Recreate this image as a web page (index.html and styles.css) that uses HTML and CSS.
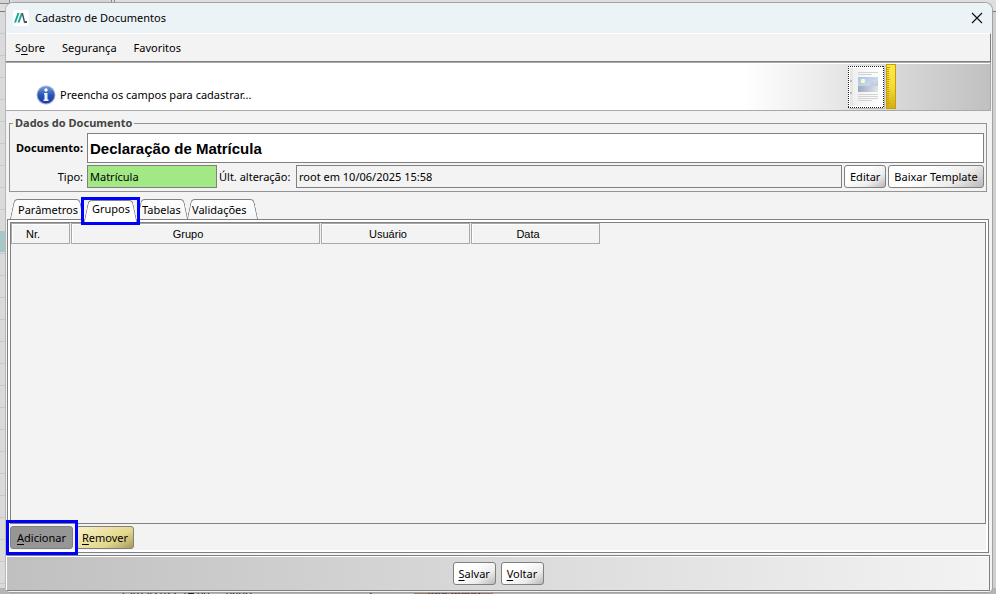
FILE: index.html
```
<!DOCTYPE html>
<html lang="pt-BR">
<head>
<meta charset="utf-8">
<title>Cadastro de Documentos</title>
<link rel="stylesheet" href="styles.css">
</head>
<body>
<div class="behind behind-top" aria-hidden="true"><span></span><span></span><span></span></div>
<div class="behind behind-side" aria-hidden="true"></div>
<div class="behind behind-bottom" aria-hidden="true"><span>13/05/2022 14:00</span><span>tiago</span><span>2</span><span class="behind-tag">Indefinido</span></div>
<main class="window">
  <header class="titlebar">
    <svg class="app-logo" width="16" height="16" viewBox="0 0 16 16" aria-hidden="true">
      <rect width="16" height="16" rx="2" fill="#fff"/>
      <path d="M1 12.500 4.500 3H6.500L3 12.500zM4.500 12.500 8 3H10L6.500 12.500z" fill="#17a58e"/>
      <path d="M8.500 3H10L12 11H14V13H11z" fill="#4a5560"/>
    </svg>
    <h1>Cadastro de Documentos</h1>
    <button class="close" type="button" aria-label="Fechar">
      <svg width="12" height="12" viewBox="0 0 12 12"><path d="M1 1 11 11M11 1 1 11" stroke="#111" stroke-width="1.200" fill="none"/></svg>
    </button>
  </header>
  <nav class="menubar">
    <button type="button">S<u>o</u>bre</button>
    <button type="button">Segurança</button>
    <button type="button">Favoritos</button>
  </nav>
  <section class="banner">
    <svg class="info" width="20" height="20" viewBox="0 0 20 20" aria-hidden="true">
      <defs><linearGradient id="blue" x1="0" y1="0" x2="0" y2="1"><stop offset="0" stop-color="#7698dc"/><stop offset=".5" stop-color="#2856b8"/><stop offset="1" stop-color="#1b3aa5"/></linearGradient></defs>
      <circle cx="10" cy="10" r="9.500" fill="#a9b5cc"/>
      <circle cx="10" cy="10" r="8.500" fill="url(#blue)"/>
      <circle cx="10" cy="5" r="1.700" fill="#fff"/>
      <path d="M8 8H11.500V14.500H12.500V16H7.500V14.500H8.500V9.500H8z" fill="#f1f3fa"/>
    </svg>
    <p>Preencha os campos para cadastrar...</p>
    <svg class="doc-art" width="50" height="46" viewBox="0 0 50 46" aria-hidden="true">
      <defs>
        <linearGradient id="sky" x1="0" y1="0" x2="1" y2="1"><stop offset="0" stop-color="#a9c4e5"/><stop offset="1" stop-color="#e4e9f0"/></linearGradient>
        <linearGradient id="sea" x1="0" y1="0" x2="1" y2="0"><stop offset="0" stop-color="#9aa9c0"/><stop offset="1" stop-color="#e0e4ea"/></linearGradient>
        <linearGradient id="page" x1="0" y1="0" x2="1" y2="0"><stop offset="0" stop-color="#eee"/><stop offset="1" stop-color="#fff"/></linearGradient>
        <linearGradient id="gold" x1="0" y1="0" x2="0" y2="1"><stop offset="0" stop-color="#ffe94a"/><stop offset=".5" stop-color="#f3dc3a"/><stop offset="1" stop-color="#d2ad12"/></linearGradient>
      </defs>
      <rect x="2" y="3" width="36" height="42" rx="1" fill="#bbb"/>
      <rect x="1" y="2" width="36" height="42" fill="#fff"/>
      <path d="M1 2.500H37M1 43.500H37M1.500 2V44M36.500 2V44" stroke="#222" stroke-dasharray="1 1"/>
      <rect x="3" y="4" width="32" height="38" fill="url(#page)"/>
      <path d="M3 4H6V42H3z" fill="#e6e6e6"/>
      <path d="M3 17H5M3 29H5" stroke="#aaa" stroke-width="1.500"/>
      <path d="M11 8.500H31M11 10.500H25M11 30.500H31M11 32.500H31M11 34.500H31M11 36.500H25" stroke="#d4d4d4"/>
      <rect x="11" y="13" width="20" height="15" fill="url(#sky)"/>
      <path d="M22 22 26 17 28 20 31 16V24H22z" fill="#c3ccd8"/>
      <path d="M11 22H31V28H11z" fill="url(#sea)"/>
      <rect x="14" y="15" width="4" height="4" rx="1" fill="#fbfbd0"/>
      <rect x="39.500" y=".500" width="9" height="44" fill="url(#gold)" stroke="#c9a003"/>
      <path d="M40 3.500H43M40 5.500H42M40 7.500H42M40 9.500H42M40 11.500H42M40 13.500H42M40 15.500H43M40 17.500H42M40 19.500H42M40 21.500H42M40 23.500H42M40 25.500H42M40 27.500H43M40 29.500H42M40 31.500H42M40 33.500H42M40 35.500H42M40 37.500H42M40 39.500H43M40 41.500H42" stroke="#c9a003"/>
    </svg>
  </section>
  <form class="content">
    <fieldset class="data">
      <legend>Dados do Documento</legend>
      <div class="fields">
        <label class="strong" for="documento">Documento:</label>
        <input class="name" id="documento" value="Declaração de Matrícula">
        <label for="tipo">Tipo:</label>
        <div class="line">
          <input class="type" id="tipo" value="Matrícula">
          <label class="changed-label" for="alteracao">Últ. alteração:</label>
          <input class="changed" id="alteracao" value="root em 10/06/2025 15:58" readonly>
          <button class="btn edit" type="button">Editar</button>
          <button class="btn template" type="button">Baixar Template</button>
        </div>
      </div>
    </fieldset>
    <div class="tabs" role="tablist">
      <button class="tab tab-wide" type="button" role="tab">Parâmetros</button>
      <button class="tab selected" type="button" role="tab" aria-selected="true">Grupos</button>
      <button class="tab tab-small" type="button" role="tab">Tabelas</button>
      <button class="tab tab-medium" type="button" role="tab">Validações</button>
    </div>
    <section class="pane">
      <div class="list">
        <table>
          <thead><tr><th class="col-nr">Nr.</th><th class="col-group">Grupo</th><th class="col-user">Usuário</th><th class="col-date">Data</th></tr></thead>
        </table>
      </div>
      <div class="actions">
        <button class="btn add" type="button"><u>A</u>dicionar</button>
        <button class="btn remove" type="button"><u>R</u>emover</button>
      </div>
    </section>
  </form>
  <footer class="footer">
    <button class="btn" type="button"><u>S</u>alvar</button>
    <button class="btn" type="button"><u>V</u>oltar</button>
  </footer>
</main>
</body>
</html>
```
FILE: styles.css
```
* { box-sizing: border-box; }
body {
  margin: 0;
  height: 100vh;
  padding: 2px 3px 1px 5px;
  display: flex;
  position: relative;
  overflow: hidden;
  background: #d0d0d0;
  color: #000;
  font: 11px/16px "Noto Sans", "Open Sans", sans-serif;
}
button, input { font: inherit; color: inherit; margin: 0; }
button { white-space: nowrap; }
u { text-underline-offset: 2px; }

.behind { position: absolute; overflow: hidden; }
.behind-top {
  top: 0; left: 0; right: 0;
  height: 12px;
  display: flex;
  gap: 2px;
  background: #dedede;
  border-bottom: 1px solid #777;
}
.behind-top span { height: 4px; border: solid #888; border-width: 0 1px 1px 0; background: #d4d4d4; }
.behind-top span:nth-child(1) { width: 10px; }
.behind-top span:nth-child(2) { width: 100px; }
.behind-side {
  top: 12px; left: 0; bottom: 0;
  width: 5px;
  background: linear-gradient(#a8c8c8, #a8c8c8) 0 219px / 5px 21px no-repeat, repeating-linear-gradient(#dadada 0 21px, #c8c8c8 21px 22px);
}
.behind-bottom {
  left: 0; right: 0; bottom: 0;
  height: 6px;
  padding-left: 120px;
  display: flex;
  align-items: flex-end;
  gap: 16px;
  background: #b4b4b4;
  color: #222;
}
.behind-bottom span { line-height: 8px; height: 6px; }
.behind-bottom span:nth-child(3) { margin-left: 100px; }
.behind-bottom .behind-tag { width: 79px; margin-left: 24px; text-align: center; background: #937a70; }

.window {
  flex: 1;
  min-width: 0;
  position: relative;
  display: flex;
  flex-direction: column;
  overflow: hidden;
  background: #f3f3f3;
  border: 1px solid #a2a2a2;
  border-left-color: #b8b8b8;
  border-radius: 8px 8px 5px 5px;
}
.titlebar {
  height: 30px;
  display: flex;
  align-items: center;
  padding: 0 9px 0 7px;
  gap: 6px;
  background: #ebf3f7;
}
.titlebar h1 { flex: 1; margin: 0; font-size: 11px; font-weight: 400; }
.close { display: flex; padding: 0; border: 0; background: none; }
.menubar {
  height: 29px;
  display: flex;
  align-items: center;
  gap: 17px;
  margin-right: 1px;
  padding: 0 9px;
  border-top: 1px solid #fff;
  border-right: 1px solid #808080;
  border-bottom: 1px solid #808080;
}
.menubar button { padding: 0; border: 0; background: none; }
.banner {
  height: 49px;
  display: flex;
  align-items: flex-end;
  gap: 4px;
  margin-right: 1px;
  padding: 0 93px 0 30px;
  border: 1px solid #a8a8a8;
  border-left: 0;
  background: linear-gradient(90deg, #fff 75%, #c0c0c0);
  box-shadow: inset 0 1px #fff;
}
.banner p { flex: 1; margin: 0 0 7px; }
.info { margin-bottom: 5px; }

.content {
  flex: 1;
  min-height: 0;
  display: flex;
  flex-direction: column;
  padding: 5px 3px 2px 1px;
}
.data {
  min-width: 0;
  margin: 0 2px;
  padding: 3px 2px;
  border: 1px solid #949494;
}
.data legend { margin-left: 1px; padding: 0 2px; line-height: 14px; font-weight: 700; color: #444; }
.fields {
  display: grid;
  grid-template-columns: 71px 1fr;
  gap: 2px 4px;
  align-items: center;
}
.fields > label { text-align: right; white-space: nowrap; }
.fields .strong { font-weight: 700; }
.fields input {
  min-width: 0;
  height: 23px;
  padding: 0 2px;
  border: 1px solid #808080;
  border-radius: 0;
  background: #f3f3f3;
}
.fields .name {
  height: 30px;
  background: #fff;
  font: 700 15px "Liberation Sans", sans-serif;
}
.line { display: flex; align-items: center; gap: 2px; }
.fields .type { width: 130px; background: #a2e884; }
.changed-label { width: 75px; white-space: nowrap; }
.fields .changed { flex: 1; }
.btn {
  height: 23px;
  padding: 0 5px;
  border: 1px solid #808080;
  border-radius: 3px;
  background: linear-gradient(145deg, #fff 35%, #ededed 70%, #b8b8b8);
}
.edit { width: 42px; }
.template { width: 96px; }

.tabs {
  position: relative;
  z-index: 2;
  height: 27px;
  display: flex;
  align-items: flex-end;
  padding: 0 3px;
}
.tab {
  position: relative;
  z-index: 1;
  height: 20px;
  padding: 1px 0 0 5px;
  border: 0;
  background: none;
  text-align: left;
}
.tab::before, .tab::after {
  content: "";
  position: absolute;
  z-index: -1;
  top: 0;
  bottom: 0;
  width: 55%;
  border-top: 1px solid #808080;
  background: linear-gradient(#fff, #f5f5f5);
}
.tab::before { left: 2px; border-left: 1px solid #808080; border-top-left-radius: 4px; transform: skewX(-12deg); }
.tab::after { right: 2px; border-right: 1px solid #808080; border-top-right-radius: 4px; transform: skewX(12deg); }
.tab-wide { width: 74px; padding-left: 8px; }
.tab-small { width: 50px; }
.tab-medium { width: 70px; }
.tab.selected {
  z-index: 2;
  width: 53px;
  height: 22px;
  margin-bottom: -3px;
  padding: 0 0 4px 8px;
  outline: 3px solid #00f;
}
.tab.selected::before, .tab.selected::after { background: #fff; }

.pane {
  flex: 1;
  display: flex;
  flex-direction: column;
  border: 1px solid #808080;
  padding: 2px;
  background: #f3f3f3;
  box-shadow: inset 0 0 0 2px #fff;
}
.list { flex: 1; border: 1px solid #808080; background: #f3f3f3; }
.list table { border-collapse: separate; border-spacing: 1px 0; table-layout: fixed; width: 591px; margin-left: -1px; }
.list th {
  height: 21px;
  padding: 0 15px 0 0;
  border: 1px solid #a8a8a8;
  box-shadow: inset 1px 1px #fff;
  font: 400 11px/14px "Liberation Sans", sans-serif;
  text-align: center;
}
.col-nr { width: 59px; }
.col-group { width: 249px; }
.col-user { width: 149px; }
.col-date { width: 129px; }
.actions { display: flex; gap: 3px; padding-top: 2px; height: 26px; }
.add { position: relative; width: 63px; background: #969696; }
.remove { width: 58px; background: linear-gradient(150deg, #f8f0c4, #e4d88c 65%, #a69a5c); }
.add::after { content: ""; position: absolute; inset: -7px -6px -7px -5px; border: 3px solid #00f; }

.footer {
  height: 36px;
  display: flex;
  justify-content: center;
  align-items: center;
  gap: 5px;
  margin: 0 2px 1px 0;
  padding: 1px 0 0;
  border: 1px solid #808080;
  border-left-color: #fff;
  background: linear-gradient(90deg, #c0c0c0, #f3f3f3);
  box-shadow: inset 0 1px #fff;
}
.footer .btn { width: 43px; }
```
